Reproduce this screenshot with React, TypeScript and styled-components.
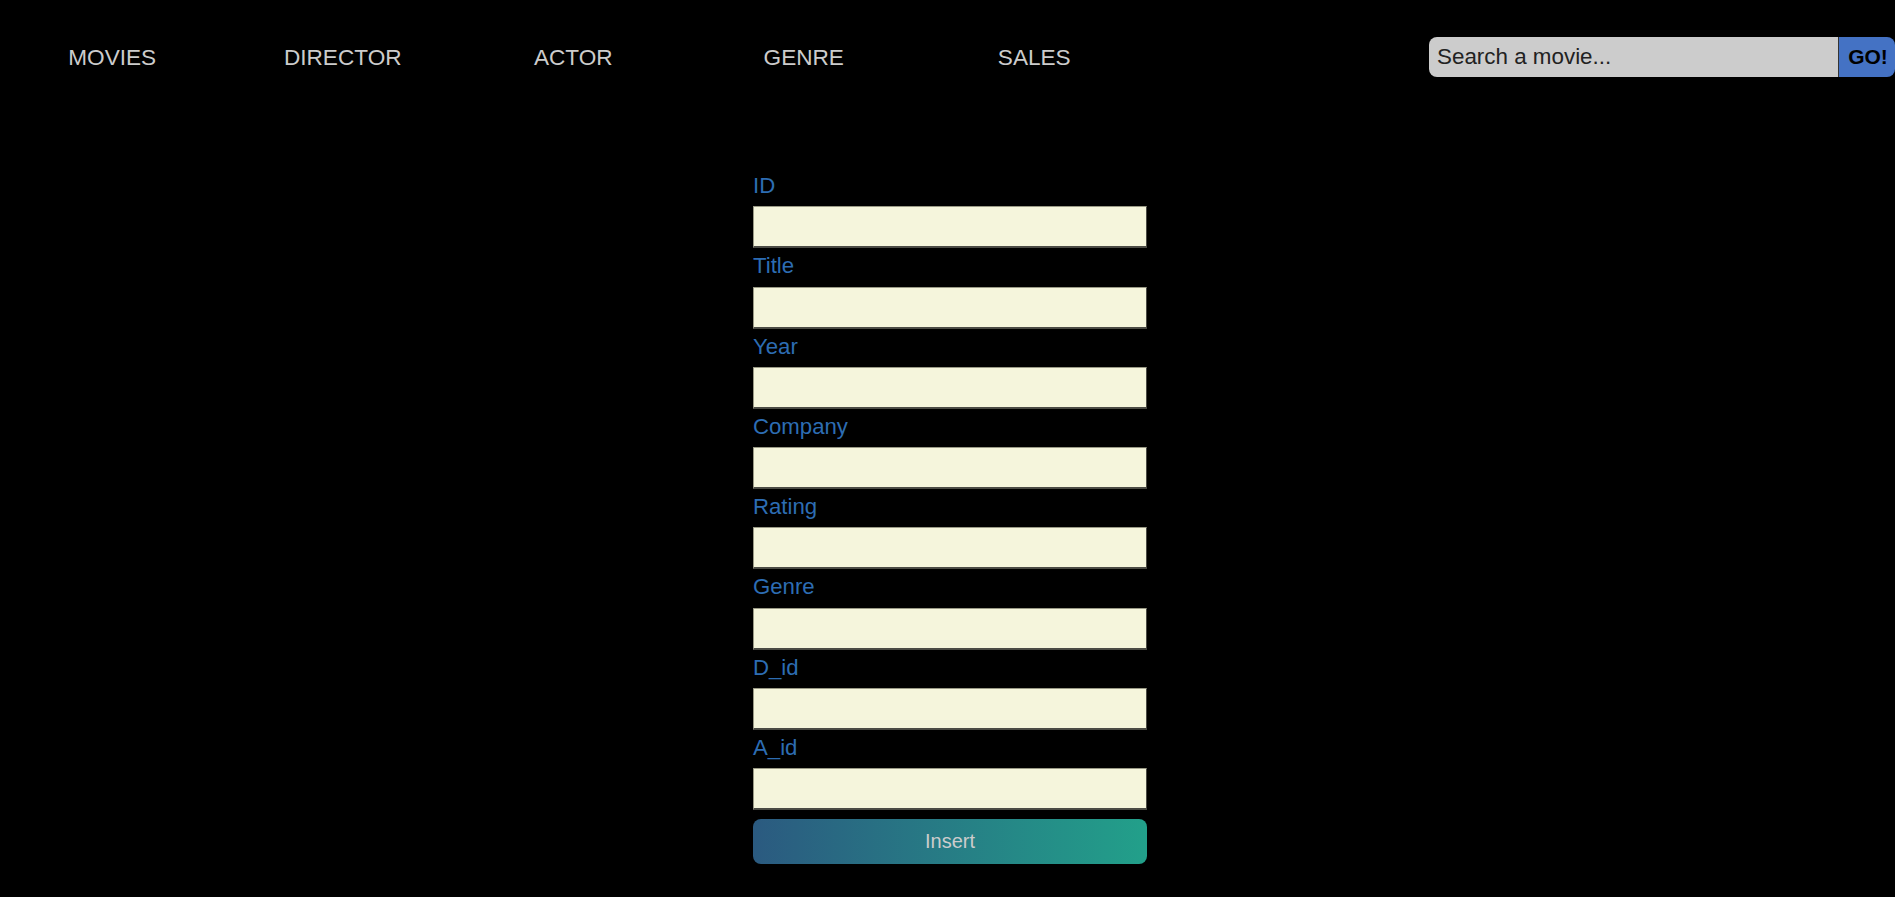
import React from "react";
import styled, { createGlobalStyle } from "styled-components";

const Global = createGlobalStyle`
  html, body {
    margin: 0;
    padding: 0;
    background: #000;
    font-family: "Liberation Sans", Arial, sans-serif;
  }
  * { box-sizing: border-box; }
`;

const Page = styled.div`
  min-height: 897px;
  background: #000;
  overflow: hidden;
`;

const Header = styled.header`
  display: flex;
  align-items: center;
  justify-content: space-between;
  padding-top: 37px;
  height: 77px;
`;

const NavList = styled.ul`
  display: flex;
  list-style: none;
  margin: 0 0 0 -3px;
  padding: 0;
`;

const NavItem = styled.li`
  width: 230.5px;
  text-align: center;
  font-size: 22.6px;
  color: #cccccc;
  line-height: 25px;
`;

const SearchForm = styled.form`
  display: flex;
  height: 40px;
`;

const SearchInput = styled.input`
  width: 410px;
  height: 40px;
  border: none;
  border-right: 1px solid #333;
  border-radius: 8px 0 0 8px;
  background: #cccccc;
  padding: 0 8px;
  font-family: "Liberation Sans", Arial, sans-serif;
  font-size: 22.4px;
  color: #222;
  outline: none;
  &::placeholder {
    color: #222;
    opacity: 1;
  }
`;

const GoButton = styled.button`
  width: 56px;
  height: 40px;
  border: none;
  border-radius: 0 8px 8px 0;
  background: #4472c4;
  color: #000;
  font-family: "Liberation Sans", Arial, sans-serif;
  font-weight: bold;
  font-size: 21px;
  padding: 0 0 0 2px;
  text-align: center;
`;

const Main = styled.main`
  display: flex;
  justify-content: center;
  padding-left: 5px;
  margin-top: 96px;
`;

const Form = styled.form`
  width: 394px;
  display: flex;
  flex-direction: column;
`;

const Label = styled.label`
  display: block;
  font-size: 22.2px;
  line-height: 25.3px;
  color: #2d6db3;
  margin-bottom: 8px;
`;

const Field = styled.input`
  display: block;
  width: 394px;
  height: 42px;
  margin: 0 0 5px 0;
  background: #f5f5dc;
  border-style: solid;
  border-width: 1px 1px 2px 1px;
  border-color: #9a9a86 #4b4b45 #4b4b45 #9a9a86;
  outline: none;
`;

const InsertButton = styled.button`
  margin-top: 4px;
  width: 394px;
  height: 45px;
  border: none;
  border-radius: 8px;
  background: linear-gradient(to right, #2b5a80, #22a08a);
  color: #cccccc;
  font-family: "Liberation Sans", Arial, sans-serif;
  font-size: 20px;
`;

const navItems = ["MOVIES", "DIRECTOR", "ACTOR", "GENRE", "SALES"];
const fields = ["ID", "Title", "Year", "Company", "Rating", "Genre", "D_id", "A_id"];

export default function App() {
  return (
    <Page>
      <Global />
      <Header>
        <NavList>
          {navItems.map((n) => (
            <NavItem key={n}>{n}</NavItem>
          ))}
        </NavList>
        <SearchForm onSubmit={(e) => e.preventDefault()}>
          <SearchInput placeholder="Search a movie..." />
          <GoButton type="submit">GO!</GoButton>
        </SearchForm>
      </Header>
      <Main>
        <Form onSubmit={(e) => e.preventDefault()}>
          {fields.map((f) => (
            <React.Fragment key={f}>
              <Label htmlFor={f}>{f}</Label>
              <Field id={f} type="text" />
            </React.Fragment>
          ))}
          <InsertButton type="submit">Insert</InsertButton>
        </Form>
      </Main>
    </Page>
  );
}
